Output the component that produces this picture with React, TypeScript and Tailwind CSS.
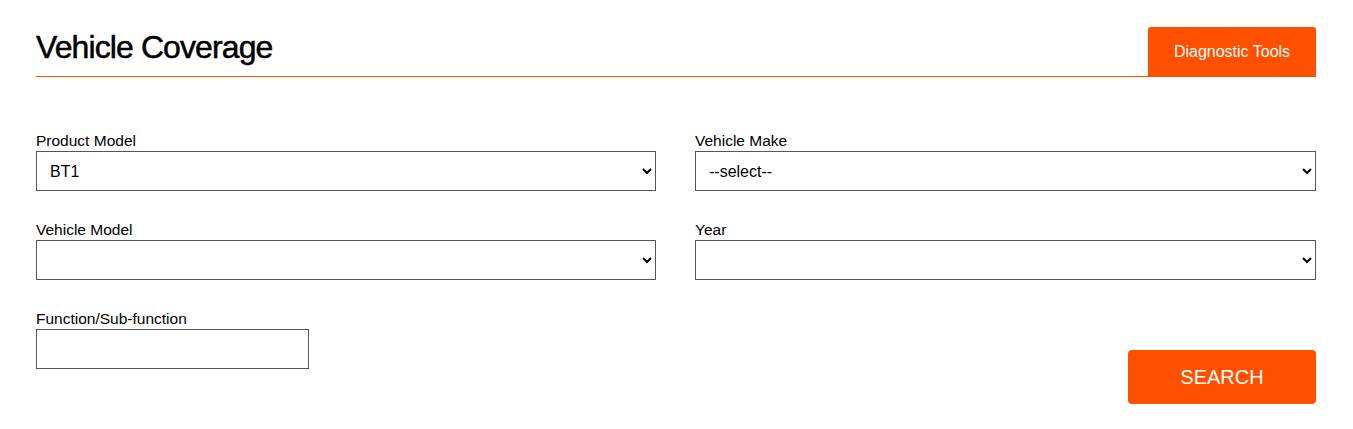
import React from "react";

const FONT = { fontFamily: '"Liberation Sans", Arial, sans-serif' };

function Field({ label, children }: { label: string; children: React.ReactNode }) {
  return (
    <div className="flex flex-col">
      <label className="mb-[1px] text-[15.5px] leading-[18px] text-black">{label}</label>
      {children}
    </div>
  );
}

function Select({ value }: { value?: string }) {
  return (
    <select
      defaultValue={value ?? ""}
      className="h-[40px] w-full border border-[#555] bg-white pl-[9px] pr-[8px] text-[16px] text-black outline-none"
      style={FONT}
    >
      <option value={value ?? ""}>{value ?? ""}</option>
    </select>
  );
}

export default function App() {
  return (
    <div className="min-h-[429px] bg-white pl-[36px] pt-[27px]" style={FONT}>
      <div className="w-[1280px]">
        <div className="flex items-end border-b border-[#ff5000]">
          <h1 className="flex-1 pb-[11px] text-[32px] leading-[36px] tracking-[-0.9px] text-black [-webkit-text-stroke:0.5px_#000]">
            Vehicle Coverage
          </h1>
          <button className="h-[49px] w-[168px] rounded-t-[3px] bg-[#ff5000] text-[16px] text-white">
            Diagnostic Tools
          </button>
        </div>

        <div className="mt-[55px] grid grid-cols-[620px_1fr] gap-x-[39px] gap-y-[30px]">
          <Field label="Product Model">
            <Select value="BT1" />
          </Field>
          <Field label="Vehicle Make">
            <Select value="--select--" />
          </Field>
          <Field label="Vehicle Model">
            <Select />
          </Field>
          <Field label="Year">
            <Select />
          </Field>
        </div>

        <div className="mt-[30px] flex items-start justify-between">
          <Field label="Function/Sub-function">
            <input
              type="text"
              className="h-[40px] w-[273px] border border-[#555] bg-white px-[8px] text-[16px] outline-none"
            />
          </Field>
          <button className="mt-[40px] h-[54px] w-[188px] rounded-[4px] bg-[#ff5000] text-[20px] text-white">
            SEARCH
          </button>
        </div>
      </div>
    </div>
  );
}
